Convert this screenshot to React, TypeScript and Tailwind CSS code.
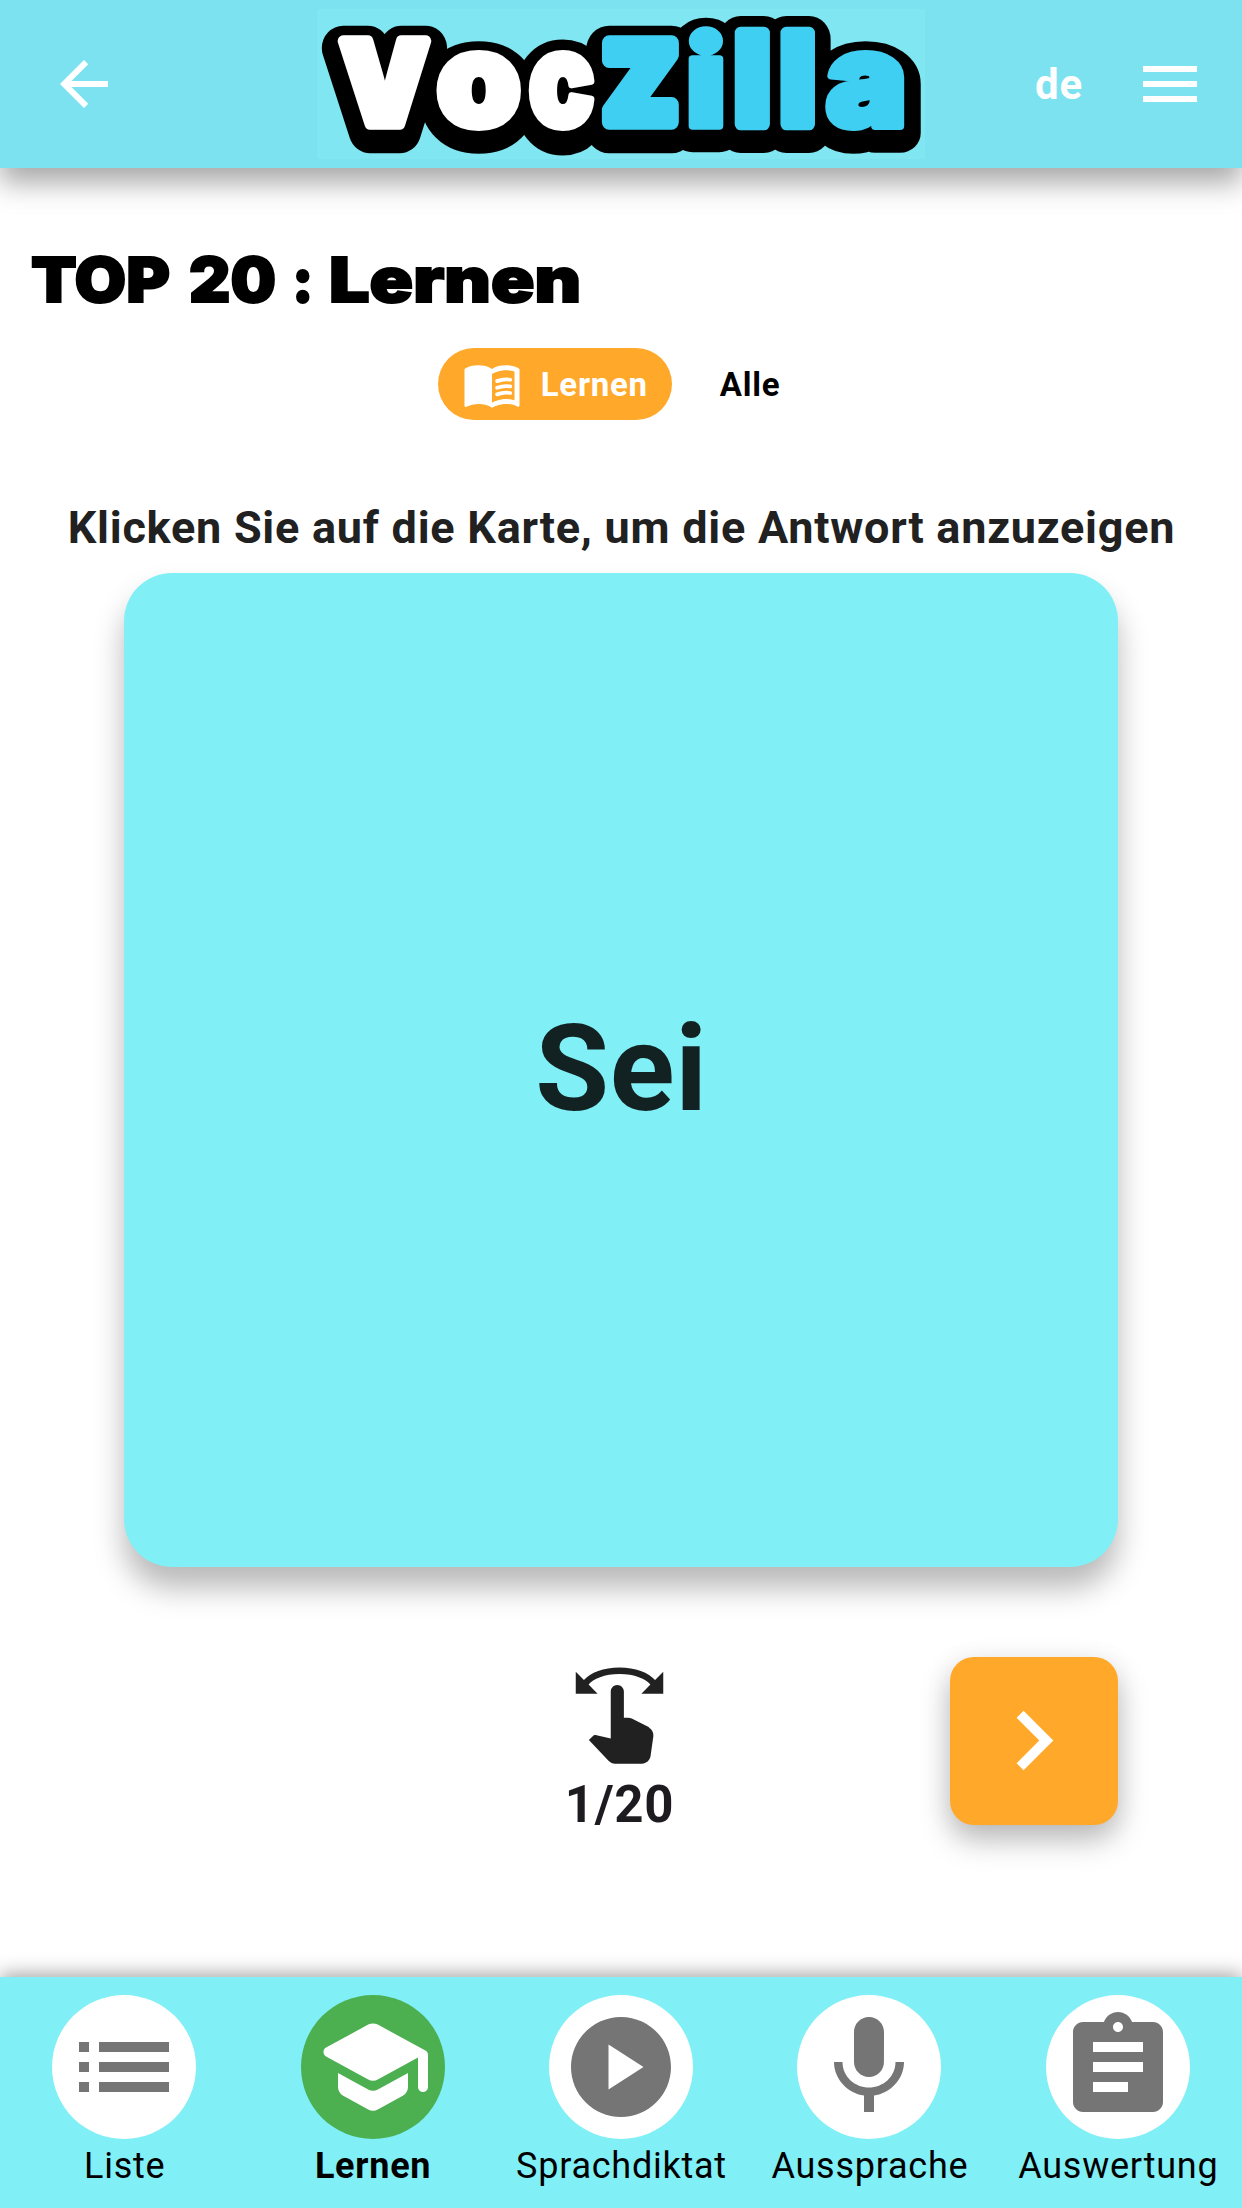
import React from 'react';

type Glyph = { ch: string; x: number; y: number; sx: number; sy: number; weight: number; fill: string };

const WHITE = '#ffffff';
const BLUE = '#3fcff2';

const LOGO: Glyph[] = [
  { ch: 'V', x: 23.7, y: 115.3, sx: 1.1, sy: 1.145, weight: 10, fill: WHITE },
  { ch: 'o', x: 119.5, y: 117.4, sx: 1.351, sy: 1.3, weight: 6, fill: WHITE },
  { ch: 'c', x: 211.7, y: 117.4, sx: 1.087, sy: 1.3, weight: 6, fill: WHITE },
  { ch: 'Z', x: 287.1, y: 113.4, sx: 1.048, sy: 1.092, weight: 14, fill: BLUE },
  { ch: 'i', x: 369.1, y: 117.1, sx: 1.35, sy: 1.224, weight: 6, fill: BLUE },
  { ch: 'l', x: 417.7, y: 114.7, sx: 1.187, sy: 1.253, weight: 10, fill: BLUE },
  { ch: 'l', x: 463.6, y: 114.7, sx: 1.165, sy: 1.253, weight: 10, fill: BLUE },
  { ch: 'a', x: 509, y: 117.4, sx: 1.356, sy: 1.3, weight: 6, fill: BLUE },
];

function Logo() {
  const glyphs = (outline: boolean) =>
    LOGO.map((g, i) => (
      <text
        key={i}
        transform={`translate(${g.x} ${g.y + (outline ? 6.5 : 0)}) scale(${g.sx} ${g.sy})`}
        fill={outline ? '#000' : g.fill}
        stroke={outline ? '#000' : g.fill}
        strokeWidth={outline ? g.weight + 65 / (g.sx + g.sy) : g.weight}
        strokeLinejoin="round"
      >
        {g.ch}
      </text>
    ));
  return (
    <svg
      viewBox="0 0 608 150"
      aria-label="VocZilla"
      className="h-[150px] w-[608px] overflow-visible bg-[#80e6f2] font-['Inter',sans-serif] text-[100px] font-black"
    >
      <g aria-hidden="true">
        {glyphs(true)}
        <ellipse cx="162" cy="84" rx="24" ry="36" />
      </g>
      <g>{glyphs(false)}</g>
    </svg>
  );
}

function Icon({ d, className }: { d: string; className: string }) {
  return (
    <svg viewBox="0 0 24 24" fill="currentColor" className={className}>
      <path d={d} />
    </svg>
  );
}

const ICONS = {
  back: 'M20 11H7.83l5.59-5.59L12 4l-8 8 8 8 1.41-1.41L7.83 13H20v-2z',
  menu: 'M3 18h18v-2H3v2zm0-5h18v-2H3v2zm0-7v2h18V6H3z',
  book: 'M21 5c-1.11-.35-2.33-.5-3.5-.5-1.95 0-4.05.4-5.5 1.5-1.45-1.1-3.55-1.5-5.5-1.5S2.45 4.9 1 6v14.65c0 .25.25.5.5.5.1 0 .15-.05.25-.05C3.1 20.45 5.05 20 6.5 20c1.95 0 4.05.4 5.5 1.5 1.35-.85 3.8-1.5 5.5-1.5 1.65 0 3.35.3 4.75 1.05.1.05.15.05.25.05.25 0 .5-.25.5-.5V6c-.6-.45-1.25-.75-2-1zm0 13.5c-1.1-.35-2.3-.5-3.5-.5-1.7 0-4.15.65-5.5 1.5V8c1.35-.85 3.8-1.5 5.5-1.5 1.2 0 2.4.15 3.5.5v11.5z',
  swipe:
    'M18.89 14.75l-4.09-2.04c-.28-.14-.58-.21-.89-.21H13v-6c0-.83-.67-1.5-1.5-1.5S10 5.67 10 6.5v10.74l-3.25-.74c-.33-.07-.68.03-.92.28L5 17.62l4.54 4.79c.38.38.89.59 1.42.59h6.16c1 0 1.84-.73 1.98-1.72l.63-4.46c.12-.85-.32-1.69-1.09-2.07zM20.13 3.87C18.69 2.17 15.6 1 12 1S5.31 2.17 3.87 3.87L2 2v5h5L4.93 4.93c1-1.29 3.7-2.43 7.07-2.43s6.07 1.14 7.07 2.43L17 7h5V2l-1.87 1.87z',
  next: 'M10 6L8.59 7.41 13.17 12l-4.58 4.59L10 18l6-6z',
  list: 'M3 13h2v-2H3v2zm0 4h2v-2H3v2zm0-8h2V7H3v2zm4 4h14v-2H7v2zm0 4h14v-2H7v2zM7 7v2h14V7H7z',
  school:
    'M5 13.18v2.81c0 .73.4 1.41 1.04 1.76l5 2.73c.6.33 1.32.33 1.92 0l5-2.73c.64-.35 1.04-1.03 1.04-1.76v-2.81l-6.04 3.3c-.6.33-1.32.33-1.92 0L5 13.18zm6.04-9.66l-8.43 4.6c-.69.38-.69 1.38 0 1.76l8.43 4.6c.6.33 1.32.33 1.92 0L21 10.09V16c0 .55.45 1 1 1s1-.45 1-1V9.59c0-.37-.2-.7-.52-.88l-9.52-5.19c-.6-.32-1.32-.32-1.92 0z',
  play: 'M12 2C6.48 2 2 6.48 2 12s4.48 10 10 10 10-4.48 10-10S17.52 2 12 2zM9.5 16.5v-9l7 4.5-7 4.5z',
  mic: 'M12 14c1.66 0 2.99-1.34 2.99-3L15 5c0-1.66-1.34-3-3-3S9 3.34 9 5v6c0 1.66 1.34 3 3 3zm5.3-3c0 3-2.54 5.1-5.3 5.1S6.7 14 6.7 11H5c0 3.41 2.72 6.23 6 6.72V21h2v-3.28c3.28-.48 6-3.3 6-6.72h-1.7z',
  clipboard:
    'M19 3h-4.18C14.4 1.84 13.3 1 12 1c-1.3 0-2.4.84-2.82 2H5c-1.1 0-2 .9-2 2v14c0 1.1.9 2 2 2h14c1.1 0 2-.9 2-2V5c0-1.1-.9-2-2-2zm-7 0c.55 0 1 .45 1 1s-.45 1-1 1-1-.45-1-1 .45-1 1-1zm2 14H7v-2h7v2zm3-4H7v-2h10v2zm0-4H7V7h10v2z',
};

function BookIcon() {
  return (
    <svg viewBox="0 0 24 24" fill="currentColor" className="size-[60px]">
      <path d={ICONS.book} />
      <g fill="none" stroke="currentColor" strokeWidth="1.5" strokeLinecap="round">
        <path d="M14.05 10.85a10.6 10.6 0 0 1 5.25-.55" />
        <path d="M14.05 13.5a10.6 10.6 0 0 1 5.25-.55" />
        <path d="M14.05 16.15a10.6 10.6 0 0 1 5.25-.55" />
      </g>
    </svg>
  );
}

const NAV = [
  { label: 'Liste', icon: ICONS.list, active: false },
  { label: 'Lernen', icon: ICONS.school, active: true },
  { label: 'Sprachdiktat', icon: ICONS.play, active: false },
  { label: 'Aussprache', icon: ICONS.mic, active: false },
  { label: 'Auswertung', icon: ICONS.clipboard, active: false },
];

export default function App() {
  return (
    <div className="flex h-[2208px] w-[1242px] flex-col overflow-hidden bg-white font-['Roboto',sans-serif] tracking-[0.75px] text-black">
      <header className="flex h-[168px] shrink-0 items-center bg-[#7de2f0] pl-12 text-white shadow-[0_15px_26px_rgba(0,0,0,0.34)]">
        <button aria-label="Zurück">
          <Icon d={ICONS.back} className="size-[72px]" />
        </button>
        <div className="ml-[197px]">
          <Logo />
        </div>
        <span className="ml-[110px] pt-[2px] text-[42px] leading-[48px] font-bold">de</span>
        <button aria-label="Menü" className="mr-9 ml-auto">
          <Icon d={ICONS.menu} className="size-[72px]" />
        </button>
      </header>

      <main className="flex flex-1 flex-col items-center">
        <h1 className="mt-[74px] flex w-full pl-[31px] font-['Inter',sans-serif] text-[62px] leading-[75px] font-black tracking-normal [-webkit-text-stroke:2px_black]">
          <span className="w-[158px] origin-left scale-x-[1.075]">TOP</span>
          <span className="w-[103px] origin-left scale-x-[1.033]">20</span>
          <span className="w-[37px] origin-left scale-x-[0.93]">:</span>
          <span className="origin-left scale-x-[1.158]">Lernen</span>
        </h1>

        <div className="mt-[31px] flex gap-6 text-[33px] leading-[72px] font-bold">
          <button className="flex h-[72px] items-center gap-[18px] rounded-full bg-[#ffa829] px-6 text-white">
            <BookIcon />
            <span className="pt-[2px] pl-px">Lernen</span>
          </button>
          <button className="h-[72px] px-6 pt-px">Alle</button>
        </div>

        <p className="mt-[81px] pl-px text-[45px] leading-[54px] font-bold whitespace-nowrap text-[#212121]">
          Klicken Sie auf die Karte, um die Antwort anzuzeigen
        </p>

        <div className="mt-[18px] flex h-[993.6px] w-[993.6px] shrink-0 items-center justify-center rounded-[48px] bg-[#80eff6] pb-[2px] pl-px text-[120px] font-bold text-[#122121] shadow-[0_21px_30px_rgba(0,0,0,0.28)]">
          Sei
        </div>

        <div className="mt-[90px] flex w-[993.6px] justify-between">
          <div className="w-[165px]" />
          <div className="flex flex-col items-center pt-[6px]">
            <Icon d={ICONS.swipe} className="size-[105px] text-[#212121]" />
            <span className="mt-[7px] text-[51px] leading-[60px] font-bold text-[#1d1b20]">1/20</span>
          </div>
          <button
            aria-label="Weiter"
            className="flex size-[168px] items-center justify-center rounded-[24px] bg-[#ffa829] text-white shadow-[0_15px_30px_rgba(0,0,0,0.26),0_3px_30px_rgba(0,0,0,0.06)]"
          >
            <Icon d={ICONS.next} className="size-[119px]" />
          </button>
        </div>
      </main>

      <nav className="grid h-[231px] shrink-0 grid-cols-5 bg-[#80eff6] pt-[18px] text-[36px] shadow-[0_-3px_18px_rgba(0,0,0,0.36)]">
        {NAV.map((n) => (
          <button key={n.label} className="flex flex-col items-center">
            <span
              className={
                n.active
                  ? 'flex size-[144px] items-center justify-center rounded-full bg-[#4caf50] text-white'
                  : 'flex size-[144px] items-center justify-center rounded-full bg-white text-[#757575]'
              }
            >
              <Icon d={n.icon} className="size-[120px]" />
            </span>
            <span className={n.active ? 'mt-[6px] pl-px leading-[42px] font-bold' : 'mt-[6px] pl-px leading-[42px]'}>
              {n.label}
            </span>
          </button>
        ))}
      </nav>
    </div>
  );
}
